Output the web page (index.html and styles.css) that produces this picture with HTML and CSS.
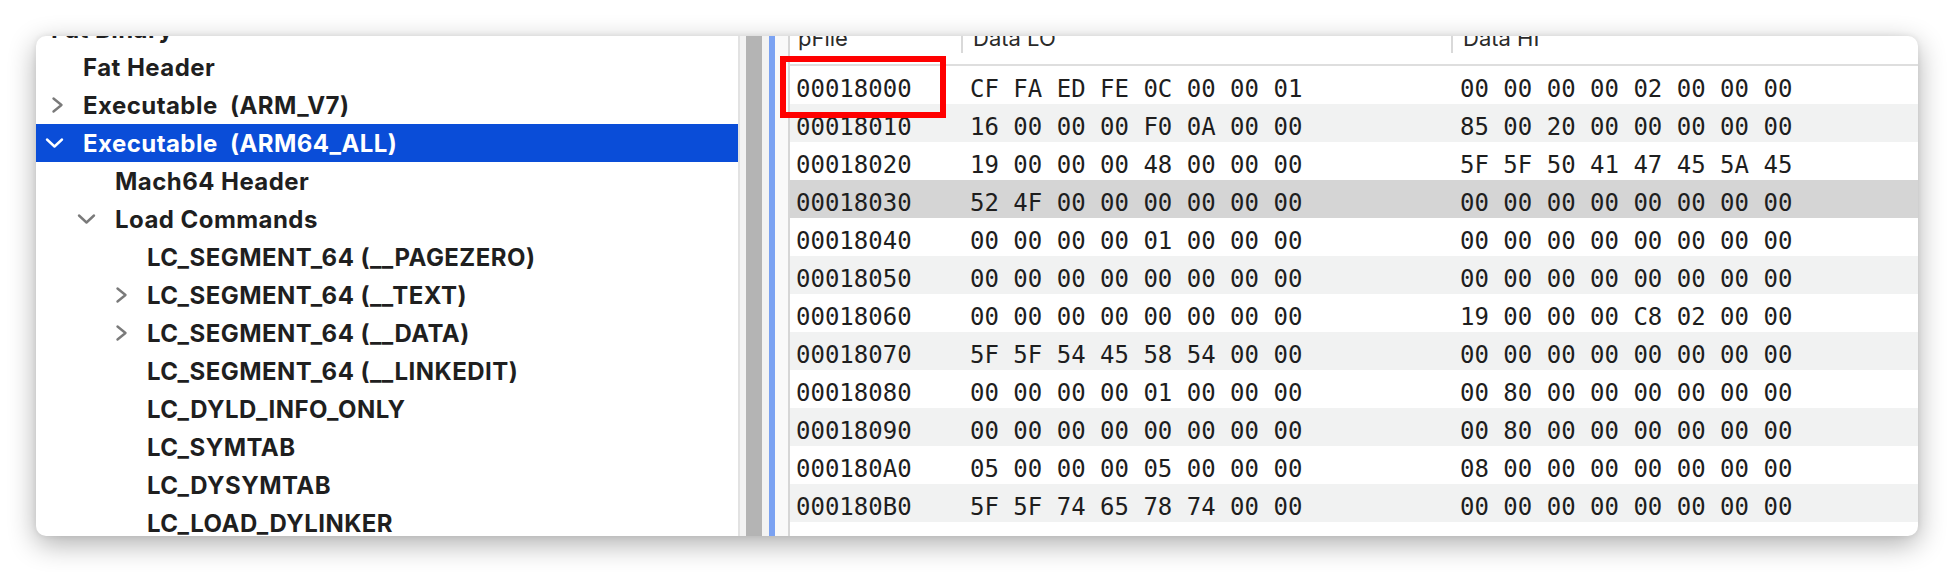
FILE: index.html
```html
<!DOCTYPE html>
<html>
<head>
<meta charset="utf-8">
<link rel="stylesheet" href="styles.css">
</head>
<body>
<div class="window">
  <div class="tree">
    <div class="row d0"><span class="label">Fat Binary</span></div>
    <div class="row d1"><span class="slot"></span><span class="label">Fat Header</span></div>
    <div class="row d1"><span class="slot"><svg class="chev" viewBox="0 0 24 24"><polyline points="9.5,5.5 17.5,12 9.5,18.5"/></svg></span><span class="label">Executable&nbsp; (ARM_V7)</span></div>
    <div class="row d1 selected"><span class="slot"><svg class="chev" viewBox="0 0 24 24"><polyline points="3,8.5 10.5,15.5 18,8.5"/></svg></span><span class="label">Executable&nbsp; (ARM64_ALL)</span></div>
    <div class="row d2"><span class="slot"></span><span class="label">Mach64 Header</span></div>
    <div class="row d2"><span class="slot"><svg class="chev" viewBox="0 0 24 24"><polyline points="3,8.5 10.5,15.5 18,8.5"/></svg></span><span class="label">Load Commands</span></div>
    <div class="row d3"><span class="slot"></span><span class="label">LC_SEGMENT_64 (__PAGEZERO)</span></div>
    <div class="row d3"><span class="slot"><svg class="chev" viewBox="0 0 24 24"><polyline points="9.5,5.5 17.5,12 9.5,18.5"/></svg></span><span class="label">LC_SEGMENT_64 (__TEXT)</span></div>
    <div class="row d3"><span class="slot"><svg class="chev" viewBox="0 0 24 24"><polyline points="9.5,5.5 17.5,12 9.5,18.5"/></svg></span><span class="label">LC_SEGMENT_64 (__DATA)</span></div>
    <div class="row d3"><span class="slot"></span><span class="label">LC_SEGMENT_64 (__LINKEDIT)</span></div>
    <div class="row d3"><span class="slot"></span><span class="label">LC_DYLD_INFO_ONLY</span></div>
    <div class="row d3"><span class="slot"></span><span class="label">LC_SYMTAB</span></div>
    <div class="row d3"><span class="slot"></span><span class="label">LC_DYSYMTAB</span></div>
    <div class="row d3"><span class="slot"></span><span class="label">LC_LOAD_DYLINKER</span></div>
  </div>
  <div class="splitter">
    <div class="sp-edge"></div>
    <div class="sp-light"></div>
    <div class="sp-grip"></div>
    <div class="sp-light2"></div>
    <div class="sp-blue"></div>
    <div class="sp-pad"></div>
    <div class="sp-line"></div>
  </div>
  <div class="table">
    <div class="thead">
      <div class="th">pFile</div>
      <div class="th sep">Data LO</div>
      <div class="th sep">Data HI</div>
    </div>
    <div class="tbody">
      <div class="tr"><div class="td">00018000</div><div class="td">CF FA ED FE 0C 00 00 01</div><div class="td">00 00 00 00 02 00 00 00</div></div>
      <div class="tr alt"><div class="td">00018010</div><div class="td">16 00 00 00 F0 0A 00 00</div><div class="td">85 00 20 00 00 00 00 00</div></div>
      <div class="tr"><div class="td">00018020</div><div class="td">19 00 00 00 48 00 00 00</div><div class="td">5F 5F 50 41 47 45 5A 45</div></div>
      <div class="tr sel"><div class="td">00018030</div><div class="td">52 4F 00 00 00 00 00 00</div><div class="td">00 00 00 00 00 00 00 00</div></div>
      <div class="tr"><div class="td">00018040</div><div class="td">00 00 00 00 01 00 00 00</div><div class="td">00 00 00 00 00 00 00 00</div></div>
      <div class="tr alt"><div class="td">00018050</div><div class="td">00 00 00 00 00 00 00 00</div><div class="td">00 00 00 00 00 00 00 00</div></div>
      <div class="tr"><div class="td">00018060</div><div class="td">00 00 00 00 00 00 00 00</div><div class="td">19 00 00 00 C8 02 00 00</div></div>
      <div class="tr alt"><div class="td">00018070</div><div class="td">5F 5F 54 45 58 54 00 00</div><div class="td">00 00 00 00 00 00 00 00</div></div>
      <div class="tr"><div class="td">00018080</div><div class="td">00 00 00 00 01 00 00 00</div><div class="td">00 80 00 00 00 00 00 00</div></div>
      <div class="tr alt"><div class="td">00018090</div><div class="td">00 00 00 00 00 00 00 00</div><div class="td">00 80 00 00 00 00 00 00</div></div>
      <div class="tr"><div class="td">000180A0</div><div class="td">05 00 00 00 05 00 00 00</div><div class="td">08 00 00 00 00 00 00 00</div></div>
      <div class="tr alt"><div class="td">000180B0</div><div class="td">5F 5F 74 65 78 74 00 00</div><div class="td">00 00 00 00 00 00 00 00</div></div>
    </div>
    <div class="callout"></div>
  </div>
</div>
</body>
</html>
```

FILE: styles.css
```css
html, body {
  margin: 0;
  padding: 0;
  background: #ffffff;
}
body {
  width: 1954px;
  height: 572px;
  padding: 36px 0 0 36px;
  box-sizing: border-box;
  overflow: hidden;
}
.window {
  width: 1882px;
  height: 500px;
  border-radius: 10px;
  overflow: hidden;
  background: #ffffff;
  display: flex;
  box-shadow: 0 8px 28px rgba(0, 0, 0, 0.32), 0 0 6px rgba(0, 0, 0, 0.08);
}

/* ---------- tree ---------- */
.tree {
  width: 702px;
  flex: none;
  margin-top: -26px;
  font-family: Inter, "Liberation Sans", sans-serif;
  font-weight: 700;
  font-size: 24px;
  letter-spacing: 0.45px;
  color: #1f1f1f;
}
.row {
  height: 38px;
  display: flex;
  align-items: center;
  white-space: nowrap;
}
.row.d0 { padding-left: 15px; }
.row.d1 { padding-left: 8px; }
.row.d2 { padding-left: 40px; }
.row.d3 { padding-left: 72px; }
.slot {
  width: 39px;
  height: 24px;
  flex: none;
  display: flex;
  align-items: center;
}
.chev {
  width: 24px;
  height: 24px;
  fill: none;
  stroke: #7a7a7a;
  stroke-width: 2.4;
  stroke-linecap: round;
  stroke-linejoin: round;
}
.row.selected {
  background: #0a4dd8;
  color: #ffffff;
}
.row.selected .chev { stroke: #ffffff; }

/* ---------- splitter ---------- */
.splitter {
  width: 52px;
  flex: none;
  display: flex;
}
.sp-edge { width: 2px; background: #e2e2e2; }
.sp-light { width: 6px; background: #f3f3f3; }
.sp-grip { width: 16px; background: #b4b4b4; }
.sp-light2 { width: 7px; background: #f3f3f3; }
.sp-blue { width: 6px; background: #7ba2f2; }
.sp-pad { width: 13px; background: #f9f9f9; }
.sp-line { width: 2px; background: #d6d6d6; }

/* ---------- table ---------- */
.table {
  flex: 1;
  position: relative;
  display: flex;
  flex-direction: column;
}
.thead {
  display: grid;
  grid-template-columns: 171px 490px 1fr;
  height: 38px;
  margin-top: -10px;
  border-bottom: 2px solid #dedede;
  font-family: Inter, "Liberation Sans", sans-serif;
  font-size: 22px;
  color: #2a2a2a;
}
.th {
  padding-left: 8px;
  line-height: 24px;
  position: relative;
}
.th.sep {
  padding-left: 10px;
  border-left: 2px solid #d9d9d9;
  margin-bottom: 11px;
}
.tr {
  display: grid;
  grid-template-columns: 171px 490px 1fr;
  height: 38px;
  box-sizing: border-box;
  padding-top: 9px;
  line-height: 29px;
  font-family: "DejaVu Sans Mono", monospace;
  font-size: 24px;
  color: #1e1e1e;
  white-space: pre;
}
.tr.alt { background: #f1f2f2; }
.tr.sel { background: #d5d5d5; }
.td { padding-left: 6px; }
.td + .td { padding-left: 9px; }
.callout {
  position: absolute;
  left: -10px;
  top: 20px;
  width: 166px;
  height: 62px;
  box-sizing: border-box;
  border: 6px solid #ff0000;
}
```
